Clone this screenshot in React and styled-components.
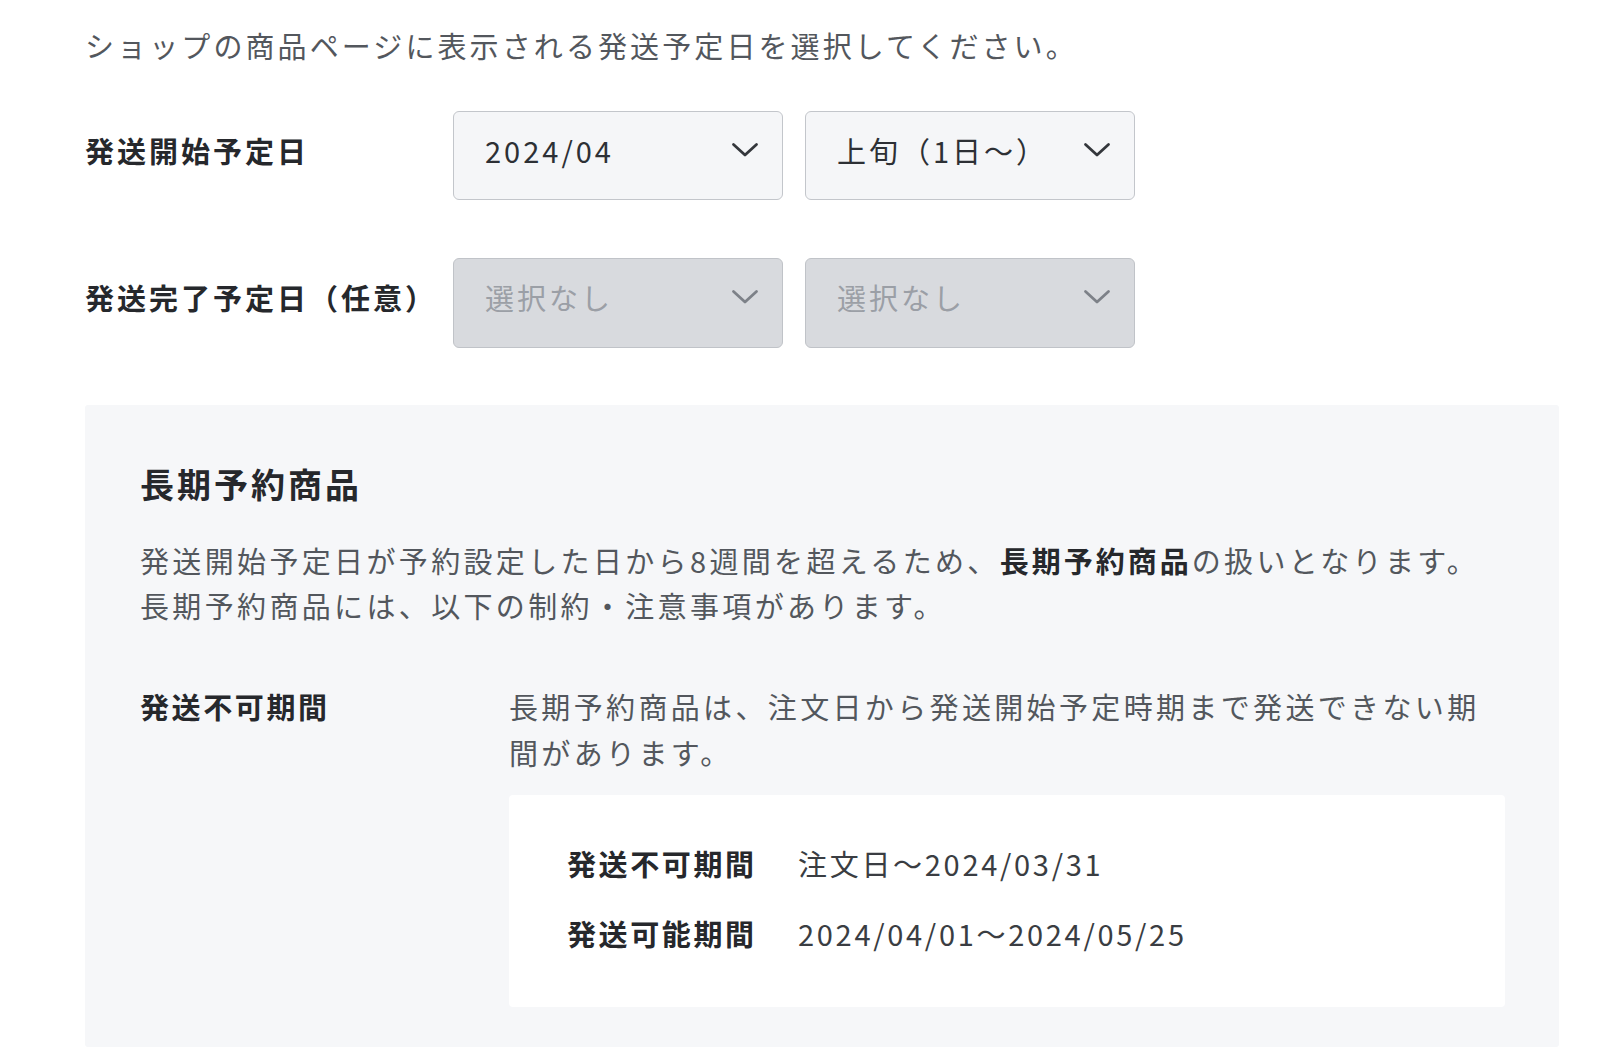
import React from 'react'
import styled, { createGlobalStyle } from 'styled-components'

const GlobalStyle = createGlobalStyle`
  body {
    margin: 0;
    background: #ffffff;
    font-family: "Noto Sans CJK JP", "Noto Sans", sans-serif;
    -webkit-font-smoothing: antialiased;
  }
`

const Page = styled.div`
  padding: 23px 41px 0 85px;
  font-size: 29px;
  letter-spacing: 3.1px;
  color: #53575d;
`

const Intro = styled.p`
  margin: 0;
  line-height: 44px;
`

const Form = styled.div`
  margin-top: 44px;
  display: flex;
  flex-direction: column;
  gap: 58px;
`

const FieldRow = styled.div`
  display: flex;
  align-items: center;
`

const FieldLabel = styled.div`
  width: 368px;
  flex-shrink: 0;
  padding-bottom: 12px;
  font-weight: 700;
  color: #26282c;
  letter-spacing: 3px;
`

const Selects = styled.div`
  display: flex;
  gap: 22px;
`

const SelectBox = styled.div`
  box-sizing: border-box;
  width: 330px;
  height: ${p => (p.$disabled ? 90 : 89)}px;
  padding: 0 23px 12px 31px;
  display: flex;
  align-items: center;
  justify-content: space-between;
  border: 1.5px solid ${p => (p.$disabled ? '#c0c3c8' : '#c3c6cb')};
  border-radius: 6px;
  background: ${p => (p.$disabled ? '#d8dade' : '#f5f6f8')};
  color: ${p => (p.$disabled ? '#9b9fa6' : '#2d3035')};
  letter-spacing: 3px;
`

const Chevron = ({ color }) => (
  <svg width="28" height="16" viewBox="0 0 28 16" fill="none">
    <path d="M2.5 2.5 L14 13 L25.5 2.5" stroke={color} strokeWidth="2.8" strokeLinecap="round" strokeLinejoin="round" />
  </svg>
)

const Select = ({ value, disabled }) => (
  <SelectBox $disabled={disabled}>
    <span>{value}</span>
    <Chevron color={disabled ? '#7d8188' : '#34373c'} />
  </SelectBox>
)

const Notice = styled.section`
  margin-top: 57px;
  padding: 55px 54px 40px 55px;
  background: #f6f7f9;
  border-radius: 3px;
`

const NoticeTitle = styled.h2`
  margin: 0;
  font-size: 34px;
  line-height: 48px;
  font-weight: 700;
  color: #26282c;
  letter-spacing: 3px;
`

const NoticeText = styled.p`
  margin: 30px 0 0;
  line-height: 45px;
  letter-spacing: 3.35px;

  strong {
    font-weight: 700;
    color: #26282c;
    letter-spacing: 3px;
  }
`

const TermRow = styled.div`
  margin-top: 55px;
  display: flex;
`

const TermLabel = styled.div`
  width: 369px;
  flex-shrink: 0;
  line-height: 46px;
  font-weight: 700;
  color: #26282c;
  letter-spacing: 2.6px;
`

const TermBody = styled.div`
  flex: 1;
`

const TermText = styled.p`
  margin: 0;
  padding-right: 10px;
  line-height: 46px;
  letter-spacing: 3.35px;
`

const PeriodCard = styled.div`
  margin-top: 20px;
  padding: 48px 58px 54px;
  background: #ffffff;
  border-radius: 4px;
  display: flex;
  flex-direction: column;
  gap: 30px;
`

const PeriodRow = styled.div`
  display: flex;
  line-height: 40px;
`

const PeriodLabel = styled.span`
  width: 231px;
  flex-shrink: 0;
  font-weight: 700;
  color: #26282c;
  letter-spacing: 2.6px;
`

const PeriodValue = styled.span`
  color: #3a3d42;
  letter-spacing: 2.7px;
`

export default function App() {
  return (
    <Page>
      <GlobalStyle />
      <Intro>ショップの商品ページに表示される発送予定日を選択してください。</Intro>
      <Form>
        <FieldRow>
          <FieldLabel>発送開始予定日</FieldLabel>
          <Selects>
            <Select value="2024/04" />
            <Select value="上旬（1日〜）" />
          </Selects>
        </FieldRow>
        <FieldRow>
          <FieldLabel>発送完了予定日（任意）</FieldLabel>
          <Selects>
            <Select value="選択なし" disabled />
            <Select value="選択なし" disabled />
          </Selects>
        </FieldRow>
      </Form>
      <Notice>
        <NoticeTitle>長期予約商品</NoticeTitle>
        <NoticeText>
          発送開始予定日が予約設定した日から8週間を超えるため、<strong>長期予約商品</strong>の扱いとなります。
          <br />
          長期予約商品には、以下の制約・注意事項があります。
        </NoticeText>
        <TermRow>
          <TermLabel>発送不可期間</TermLabel>
          <TermBody>
            <TermText>長期予約商品は、注文日から発送開始予定時期まで発送できない期間があります。</TermText>
            <PeriodCard>
              <PeriodRow>
                <PeriodLabel>発送不可期間</PeriodLabel>
                <PeriodValue>注文日〜2024/03/31</PeriodValue>
              </PeriodRow>
              <PeriodRow>
                <PeriodLabel>発送可能期間</PeriodLabel>
                <PeriodValue>2024/04/01〜2024/05/25</PeriodValue>
              </PeriodRow>
            </PeriodCard>
          </TermBody>
        </TermRow>
      </Notice>
    </Page>
  )
}
